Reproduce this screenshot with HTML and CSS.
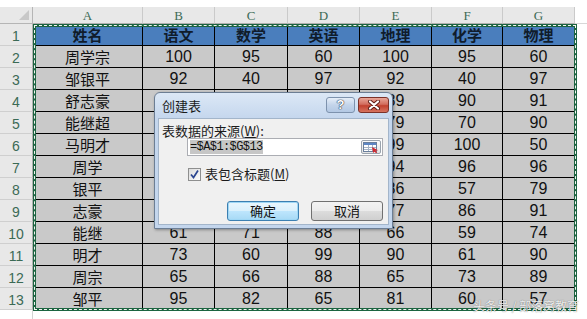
FILE: index.html
```html
<!DOCTYPE html>
<html lang="zh-CN">
<head>
    <meta charset="UTF-8">
    <title>创建表</title>
    <link rel="stylesheet" href="styles.css">
</head>
<body>
    <div class="sheet">
        <div class="grid">
            <div class="row">
                <div class="corner"><span class="tri"></span></div>
                <div class="ch">A</div><div class="ch">B</div><div class="ch">C</div><div class="ch">D</div><div class="ch">E</div><div class="ch">F</div><div class="ch">G</div><div class="fill top"></div>
            </div>
            <div class="row title">
                <div class="rh">1</div>
                <div class="c">姓名</div><div class="c">语文</div><div class="c">数学</div><div class="c">英语</div><div class="c">地理</div><div class="c">化学</div><div class="c">物理</div><div class="fill"></div>
            </div>
            <div class="row">
                <div class="rh">2</div>
                <div class="c name">周学宗</div><div class="c">100</div><div class="c">95</div><div class="c">60</div><div class="c">100</div><div class="c">95</div><div class="c">60</div><div class="fill"></div>
            </div>
            <div class="row">
                <div class="rh">3</div>
                <div class="c name">邹银平</div><div class="c">92</div><div class="c">40</div><div class="c">97</div><div class="c">92</div><div class="c">40</div><div class="c">97</div><div class="fill"></div>
            </div>
            <div class="row">
                <div class="rh">4</div>
                <div class="c name">舒志豪</div><div class="c">88</div><div class="c">76</div><div class="c">85</div><div class="c">89</div><div class="c">90</div><div class="c">91</div><div class="fill"></div>
            </div>
            <div class="row">
                <div class="rh">5</div>
                <div class="c name">能继超</div><div class="c">67</div><div class="c">92</div><div class="c">73</div><div class="c">79</div><div class="c">70</div><div class="c">90</div><div class="fill"></div>
            </div>
            <div class="row">
                <div class="rh">6</div>
                <div class="c name">马明才</div><div class="c">81</div><div class="c">58</div><div class="c">94</div><div class="c">99</div><div class="c">100</div><div class="c">50</div><div class="fill"></div>
            </div>
            <div class="row">
                <div class="rh">7</div>
                <div class="c name">周学</div><div class="c">75</div><div class="c">83</div><div class="c">62</div><div class="c">94</div><div class="c">96</div><div class="c">96</div><div class="fill"></div>
            </div>
            <div class="row">
                <div class="rh">8</div>
                <div class="c name">银平</div><div class="c">90</div><div class="c">64</div><div class="c">78</div><div class="c">86</div><div class="c">57</div><div class="c">79</div><div class="fill"></div>
            </div>
            <div class="row">
                <div class="rh">9</div>
                <div class="c name">志豪</div><div class="c">69</div><div class="c">97</div><div class="c">80</div><div class="c">77</div><div class="c">86</div><div class="c">91</div><div class="fill"></div>
            </div>
            <div class="row">
                <div class="rh">10</div>
                <div class="c name">能继</div><div class="c">61</div><div class="c">71</div><div class="c">88</div><div class="c">66</div><div class="c">59</div><div class="c">74</div><div class="fill"></div>
            </div>
            <div class="row">
                <div class="rh">11</div>
                <div class="c name">明才</div><div class="c">73</div><div class="c">60</div><div class="c">99</div><div class="c">90</div><div class="c">61</div><div class="c">90</div><div class="fill"></div>
            </div>
            <div class="row">
                <div class="rh">12</div>
                <div class="c name">周宗</div><div class="c">65</div><div class="c">66</div><div class="c">88</div><div class="c">65</div><div class="c">73</div><div class="c">89</div><div class="fill"></div>
            </div>
            <div class="row">
                <div class="rh">13</div>
                <div class="c name">邹平</div><div class="c">95</div><div class="c">82</div><div class="c">65</div><div class="c">81</div><div class="c">60</div><div class="c">57</div><div class="fill"></div>
            </div>
            <div class="row">
                <div class="rh blank"></div>
                <div class="fill span"></div>
            </div>
        </div>

        <!-- 选区虚线框 A1:G13 -->
        <div class="ants"></div>

        <div class="dialog">
            <div class="dlg-title">
                <span>创建表</span>
                <div class="caption-btns">
                    <span class="btn-help">?</span>
                    <span class="btn-close">
                        <svg width="14" height="10" viewBox="0 0 14 10">
                            <path d="M3 1.5l8 7M11 1.5l-8 7" stroke="#5a1a14" stroke-width="4" stroke-linecap="round"/>
                            <path d="M3 1.5l8 7M11 1.5l-8 7" stroke="#fff" stroke-width="2.2" stroke-linecap="round"/>
                        </svg>
                    </span>
                </div>
            </div>
            <div class="dlg-body">
                <div class="dlg-label">表数据的来源(<u>W</u>):</div>
                <div class="range-input">
                    <span class="sel">=$A$1:$G$13</span>
                    <span class="range-btn">
                        <svg width="16" height="11" viewBox="0 0 16 11">
                            <rect x="0.5" y="0.5" width="13" height="9" fill="#fff" stroke="#6a7f9c"/>
                            <rect x="1" y="1" width="12" height="2" fill="#5d86c4"/>
                            <path d="M1 5.5h12M1 7.5h12M5.5 3v6M9.5 3v6" stroke="#a5b3c6"/>
                            <path d="M9 5l6 3.2-2.4.5 1.6 1.8-1.1.8-1.6-1.9-1.3 1.6z" fill="#d0282d"/>
                        </svg>
                    </span>
                </div>
                <label class="chk">
                    <span class="box">
                        <svg width="11" height="11" viewBox="0 0 11 11">
                            <path d="M2 5.5l2.5 3 4.5-7" fill="none" stroke="#2b4590" stroke-width="1.7"/>
                        </svg>
                    </span>
                    <span>表包含标题(<u>M</u>)</span>
                </label>
                <div class="dlg-actions">
                    <button class="ok">确定</button>
                    <button>取消</button>
                </div>
            </div>
        </div>

        <div class="watermark">头条号 / 部落窝教育</div>
    </div>
</body>
</html>
```

FILE: styles.css
```css
body {
    margin: 0;
    background-color: #fff;
    font-family: 'Liberation Sans', 'Noto Sans CJK SC', sans-serif;
    color: #111;
}
.sheet {
    position: relative;
    width: 587px;
    height: 319px;
    padding-top: 7px;
    box-sizing: border-box;
    overflow: hidden;
}
.grid {
    display: grid;
    grid-template-columns: 33px 110px 72px 73px 72px 72px 71px 72px 1fr;
    grid-template-rows: 17px repeat(13, 22px) 1fr;
    height: 312px;
}
.row {
    display: contents;
}
.grid div {
    box-sizing: border-box;
}
.corner {
    position: relative;
    background-color: #e8e8e8;
    border-right: 1px solid #b5b5b5;
    border-bottom: 1px solid #b5b5b5;
}
.tri {
    position: absolute;
    right: 3px;
    bottom: 3px;
    width: 0;
    height: 0;
    border-left: 10px solid transparent;
    border-bottom: 10px solid #c8c8c8;
}
.ch {
    background-color: #e8e8e8;
    border-right: 1px solid #cacaca;
    border-bottom: 1px solid #b0b0b0;
    text-align: center;
    font-family: 'Liberation Serif', serif;
    font-size: 13px;
    line-height: 17px;
    color: #3b6a55;
}
.rh {
    background-color: #e8e8e8;
    border-right: 1px solid #b0b0b0;
    border-bottom: 1px solid #cfcfcf;
    text-align: center;
    font-size: 14px;
    line-height: 24px;
    color: #3b6a55;
}
.rh.blank {
    background-color: #fff;
    border-bottom: none;
    border-right: 1px solid #d4d4d4;
}
.c {
    background-color: #c9c9c9;
    border-right: 1px solid #000;
    border-bottom: 1px solid #000;
    text-align: center;
    font-size: 16px;
    line-height: 22px;
    white-space: nowrap;
}
.c.name {
    font-family: 'Noto Sans CJK SC', sans-serif;
    font-size: 15px;
    line-height: 21px;
}
.title .c {
    background-color: #4a7ebd;
    font-family: 'Noto Sans CJK SC', sans-serif;
    font-weight: bold;
    font-size: 15px;
    line-height: 21px;
    color: #101c2c;
}
.fill {
    background-color: #fff;
}
.fill.top {
    border-bottom: 1px solid #d8d8d8;
}
.fill.span {
    grid-column: 2 / -1;
}
.ants {
    position: absolute;
    left: 33px;
    top: 24px;
    width: 544px;
    height: 287px;
    box-sizing: border-box;
    border: 3px solid #1b6440;
}
.ants::after {
    content: "";
    position: absolute;
    inset: -2px;
    border: 1px dashed #f4f4f4;
}
.dialog {
    position: absolute;
    left: 154px;
    top: 92px;
    width: 239px;
    height: 137px;
    box-sizing: border-box;
    display: flex;
    flex-direction: column;
    padding: 0 3px 3px;
    border: 1px solid #6c7e94;
    border-radius: 6px 6px 0 0;
    background: linear-gradient(#dce8f6, #c4d6ed 26px, #c4d6ed);
    box-shadow: 1px 1px 3px rgba(0, 0, 0, 0.35);
    font-family: 'Noto Sans CJK SC', sans-serif;
    font-size: 13px;
    color: #1b1b1b;
}
.dlg-title {
    height: 25px;
    display: flex;
    justify-content: space-between;
    align-items: flex-start;
    padding-left: 4px;
    line-height: 25px;
}
.caption-btns {
    display: flex;
    gap: 3px;
    margin-top: 4px;
}
.btn-help,
.btn-close {
    display: flex;
    align-items: center;
    justify-content: center;
    height: 16px;
    box-sizing: border-box;
    border-radius: 3px;
}
.btn-help {
    width: 29px;
    border: 1px solid #7d92ad;
    background: linear-gradient(#e6eef8, #c3d4ea 50%, #b3c8e3);
    color: #fff;
    font-family: 'Liberation Sans', sans-serif;
    font-weight: bold;
    font-size: 13px;
    line-height: 14px;
    text-shadow: 0 0 1px #2d3a4c, 0 0 1px #2d3a4c, 0 0 1px #2d3a4c;
}
.btn-close {
    width: 31px;
    border: 1px solid #7c3229;
    background: linear-gradient(#e8a698, #d26d5e 45%, #c2412f 55%, #d6735f);
}
.dlg-body {
    flex: 1;
    background-color: #f0f0f0;
    border: 1px solid #a3b5ca;
    padding: 4px 5px 0 3px;
}
.dlg-label {
    line-height: 15px;
}
.range-input {
    display: flex;
    justify-content: space-between;
    align-items: center;
    height: 18px;
    margin-left: 25px;
    box-sizing: border-box;
    border: 1px solid #abadb3;
    background-color: #fff;
    padding: 0 1px 0 2px;
}
.sel {
    background-color: #c6c6c6;
    font-family: 'Liberation Mono', monospace;
    font-size: 12px;
    line-height: 14px;
    letter-spacing: -0.6px;
    color: #111;
}
.range-btn {
    display: flex;
    align-items: center;
    justify-content: center;
    width: 20px;
    height: 14px;
    box-sizing: border-box;
    border: 1px solid #9aa3ad;
    border-radius: 2px;
    background: linear-gradient(#fbfbfb, #e2e2e2);
}
.chk {
    display: flex;
    align-items: center;
    gap: 4px;
    margin: 11px 0 0 26px;
    line-height: 14px;
}
.box {
    display: flex;
    align-items: center;
    justify-content: center;
    width: 13px;
    height: 13px;
    box-sizing: border-box;
    border: 1px solid #8e8f8f;
    background: linear-gradient(135deg, #dcdcdc, #fbfbfb);
}
.dlg-actions {
    display: flex;
    justify-content: flex-end;
    gap: 12px;
    margin-top: 20px;
}
button {
    width: 72px;
    height: 20px;
    padding: 0;
    border: 1px solid #707070;
    border-radius: 3px;
    background: linear-gradient(#f2f2f2, #ebebeb 50%, #dddddd 50%, #cfcfcf);
    font-family: 'Noto Sans CJK SC', sans-serif;
    font-size: 13px;
    line-height: 16px;
    color: #111;
}
button.ok {
    border-color: #3c7fb1;
    background: linear-gradient(#eaf6fd, #d9f0fc 50%, #bee6fd 50%, #a7d9f5);
    box-shadow: inset 0 0 0 1px #9fd7f5;
}
.watermark {
    position: absolute;
    left: 473px;
    top: 299px;
    font-family: 'Noto Sans CJK SC', sans-serif;
    font-size: 12px;
    line-height: 14px;
    color: rgba(255, 255, 255, 0.9);
    text-shadow: 0 0 1px rgba(60, 60, 60, 0.8);
    white-space: nowrap;
}
```
